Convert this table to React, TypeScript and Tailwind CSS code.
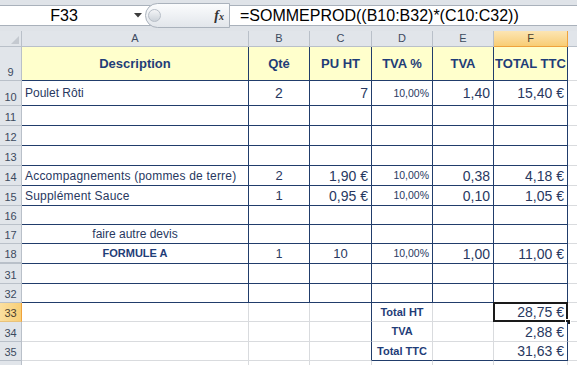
import type { ReactNode } from 'react';

type Align = 'l' | 'c' | 'r';

interface CellData {
    text?: string;
    align?: Align;
    size?: string;
    bold?: boolean;
}

interface RowData {
    n: number;
    h: string;
    cells: CellData[];
    darkRight: boolean[];
    darkBottom: boolean[];
    yellow?: boolean;
    active?: boolean;
    gap?: boolean;
    hideNumber?: boolean;
}

const COL_W = ['w-[227px]', 'w-[61px]', 'w-[62px]', 'w-[61px]', 'w-[61px]', 'w-[74px]'];
const LETTERS = ['A', 'B', 'C', 'D', 'E', 'F'];

const ALL = [true, true, true, true, true, true];
const NONE = [false, false, false, false, false, false];
const BLOCK_R = [false, false, true, false, false, true];

const pct: CellData = { text: '10,00%', align: 'r', size: 'text-[10.5px]' };
const n14 = (text: string): CellData => ({ text, align: 'r', size: 'text-[14px]' });
const empty: CellData[] = [{}, {}, {}, {}, {}, {}];

const head = (text: string): CellData => ({ text, align: 'c', size: 'text-[13px]', bold: true });

const rows: RowData[] = [
    {
        n: 9, h: 'h-[34px]', yellow: true, darkRight: ALL, darkBottom: ALL,
        cells: [head('Description'), head('Qté'), head('PU HT'), head('TVA %'), head('TVA'), head('TOTAL TTC')],
    },
    {
        n: 10, h: 'h-[25px]', darkRight: ALL, darkBottom: ALL,
        cells: [
            { text: 'Poulet Rôti', align: 'l', size: 'text-[12px]' },
            { text: '2', align: 'c', size: 'text-[14px]' },
            n14('7'), pct, n14('1,40'), n14('15,40 €'),
        ],
    },
    { n: 11, h: 'h-[20px]', darkRight: ALL, darkBottom: ALL, cells: empty },
    { n: 12, h: 'h-[20px]', darkRight: ALL, darkBottom: ALL, cells: empty },
    { n: 13, h: 'h-[20px]', darkRight: ALL, darkBottom: ALL, cells: empty },
    {
        n: 14, h: 'h-[20px]', darkRight: ALL, darkBottom: ALL,
        cells: [
            { text: 'Accompagnements (pommes de terre)', align: 'l', size: 'text-[12px] tracking-[0.2px]' },
            { text: '2', align: 'c', size: 'text-[13px]' },
            n14('1,90 €'), pct, n14('0,38'), n14('4,18 €'),
        ],
    },
    {
        n: 15, h: 'h-[20px]', darkRight: ALL, darkBottom: ALL,
        cells: [
            { text: 'Supplément Sauce', align: 'l', size: 'text-[12px] tracking-[0.2px]' },
            { text: '1', align: 'c', size: 'text-[13px]' },
            n14('0,95 €'), pct, n14('0,10'), n14('1,05 €'),
        ],
    },
    { n: 16, h: 'h-[19px]', darkRight: ALL, darkBottom: ALL, cells: empty },
    {
        n: 17, h: 'h-[19px]', darkRight: ALL, darkBottom: ALL,
        cells: [{ text: 'faire autre devis', align: 'c', size: 'text-[12px]' }, {}, {}, {}, {}, {}],
    },
    {
        n: 18, h: 'h-[20px]', darkRight: ALL, darkBottom: ALL, gap: true,
        cells: [
            { text: 'FORMULE A', align: 'c', size: 'text-[11px]', bold: true },
            { text: '1', align: 'c', size: 'text-[12px]' },
            { text: '10', align: 'c', size: 'text-[13px]' },
            pct, n14('1,00'), n14('11,00 €'),
        ],
    },
    { n: 31, h: 'h-[20px]', darkRight: ALL, darkBottom: ALL, cells: empty },
    { n: 32, h: 'h-[19px]', darkRight: ALL, darkBottom: ALL, cells: empty },
    {
        n: 33, h: 'h-[19px]', darkRight: BLOCK_R, darkBottom: NONE, active: true,
        cells: [{}, {}, {}, { text: 'Total HT', align: 'c', size: 'text-[11px]', bold: true }, {}, n14('28,75 €')],
    },
    {
        n: 34, h: 'h-[20px]', darkRight: BLOCK_R, darkBottom: NONE,
        cells: [{}, {}, {}, { text: 'TVA', align: 'c', size: 'text-[11px]', bold: true }, {}, n14('2,88 €')],
    },
    {
        n: 35, h: 'h-[19px]', darkRight: BLOCK_R, darkBottom: [false, false, false, true, true, true],
        cells: [{}, {}, {}, { text: 'Total TTC', align: 'c', size: 'text-[11px]', bold: true }, {}, n14('31,63 €')],
    },
    // row 36 is only a sliver at the bottom edge, its number sits below the fold
    { n: 36, h: 'h-[20px]', darkRight: NONE, darkBottom: NONE, cells: empty, hideNumber: true },
];

const alignCls = (a?: Align) =>
    a === 'r' ? 'justify-end pr-[3px]' : a === 'c' ? 'justify-center' : 'justify-start pl-[3px]';

function FormulaBar() {
    return (
        <div className="h-[31px] bg-[#dfe3e8] pt-[5px]">
            <div className="flex h-[21px] border-t border-b border-[#a9b1bb] bg-white">
                {/* Name box */}
                <div className="flex w-[145px] items-center">
                    <div className="w-[128px] text-center text-[16px] leading-none text-black">F33</div>
                    <svg width="8" height="5" viewBox="0 0 8 5" className="ml-[6px]">
                        <polygon points="0,0 8,0 4,4.5" fill="#3c3c3c" />
                    </svg>
                </div>
                {/* Round control with fx */}
                <div className="relative -my-[3px] flex h-[25px] w-[85px] items-center rounded-l-full border border-[#aab2bc] bg-gradient-to-b from-[#fbfcfd] to-[#e2e6eb]">
                    <div className="ml-[2px] h-[13px] w-[13px] rounded-full border border-[#b7bec7] bg-gradient-to-b from-[#f4f5f7] to-[#cdd3da]" />
                    <div className="ml-auto mr-[5px] font-['Liberation_Serif',serif] text-[14px] font-bold italic leading-none text-[#333]">
                        f<span className="text-[10px]">x</span>
                    </div>
                </div>
                {/* Formula */}
                <div className="flex flex-1 items-center pl-[10px] text-[16px] leading-none text-black">
                    =SOMMEPROD((B10:B32)*(C10:C32))
                </div>
            </div>
        </div>
    );
}

function ColumnHeaders() {
    return (
        <div className="flex h-[16px]">
            <div className="relative w-[22px] border-r border-b border-[#b9c0c9] bg-[#e1e5ea]">
                <svg width="8" height="8" viewBox="0 0 8 8" className="absolute right-[2px] bottom-[2px]">
                    <polygon points="8,0 8,8 0,8" fill="#c4c9d0" />
                </svg>
            </div>
            {LETTERS.map((l, i) => (
                <div
                    key={l}
                    className={`${COL_W[i]} flex items-center justify-center border-r border-b text-[11px] leading-none ${
                        l === 'F'
                            ? 'border-[#efa23c] bg-gradient-to-b from-[#fce5b3] to-[#f8cd74] text-[#4a4030]'
                            : 'border-[#b9c0c9] bg-[#e1e5ea] text-[#3c4a5e]'
                    }`}
                >
                    {l}
                </div>
            ))}
            <div className="flex-1 border-b border-[#b9c0c9] bg-[#e1e5ea]" />
        </div>
    );
}

function Row({ row }: { row: RowData }) {
    return (
        <div className={`flex ${row.h}`}>
            <div
                className={`flex w-[22px] items-end justify-center pb-[2px] text-[11px] leading-none ${
                    row.active
                        ? 'border-r border-b border-r-[#efa23c] border-b-[#e9c27a] bg-gradient-to-r from-[#fbdf9f] to-[#f8cf76] text-[#4a4030]'
                        : `border-r border-b border-[#b9c0c9] bg-[#e1e5ea] text-[#3c4a5e] ${row.gap ? 'border-b-2' : ''}`
                }`}
            >
                {!row.hideNumber && row.n}
            </div>
            {row.cells.map((c, i) => {
                const isSel = row.active && i === 5;
                return (
                    <div
                        key={i}
                        className={`${COL_W[i]} relative flex items-center border-r border-b ${alignCls(c.align)} ${
                            row.darkRight[i] ? 'border-r-[#213d6b]' : 'border-r-[#d9dbde]'
                        } ${row.darkBottom[i] ? 'border-b-[#213d6b]' : 'border-b-[#d9dbde]'} ${
                            row.yellow ? 'bg-[#ffffcc]' : 'bg-white'
                        }`}
                    >
                        {c.text && (
                            <span
                                className={`whitespace-nowrap leading-none ${c.size ?? 'text-[12px]'} ${
                                    c.bold ? 'font-bold text-[#1f3d78]' : 'text-[#28385f]'
                                }`}
                            >
                                {c.text}
                            </span>
                        )}
                        {isSel && (
                            <>
                                <div className="absolute -top-[1px] -left-[1px] right-[-1px] bottom-[-1px] border-2 border-[#1a1a1a]" />
                                <div className="absolute -right-[4px] -bottom-[4px] h-[6px] w-[6px] border border-white bg-[#1a1a1a]" />
                            </>
                        )}
                    </div>
                );
            })}
            <div className="flex-1 border-b border-[#d9dbde] bg-white" />
        </div>
    );
}

export default function App() {
    return (
        <div className="h-[365px] w-[577px] overflow-hidden bg-white font-['Liberation_Sans',Arial,sans-serif]">
            <FormulaBar />
            <ColumnHeaders />
            {rows.map(r => (
                <Row key={r.n} row={r} />
            ))}
        </div>
    );
}
